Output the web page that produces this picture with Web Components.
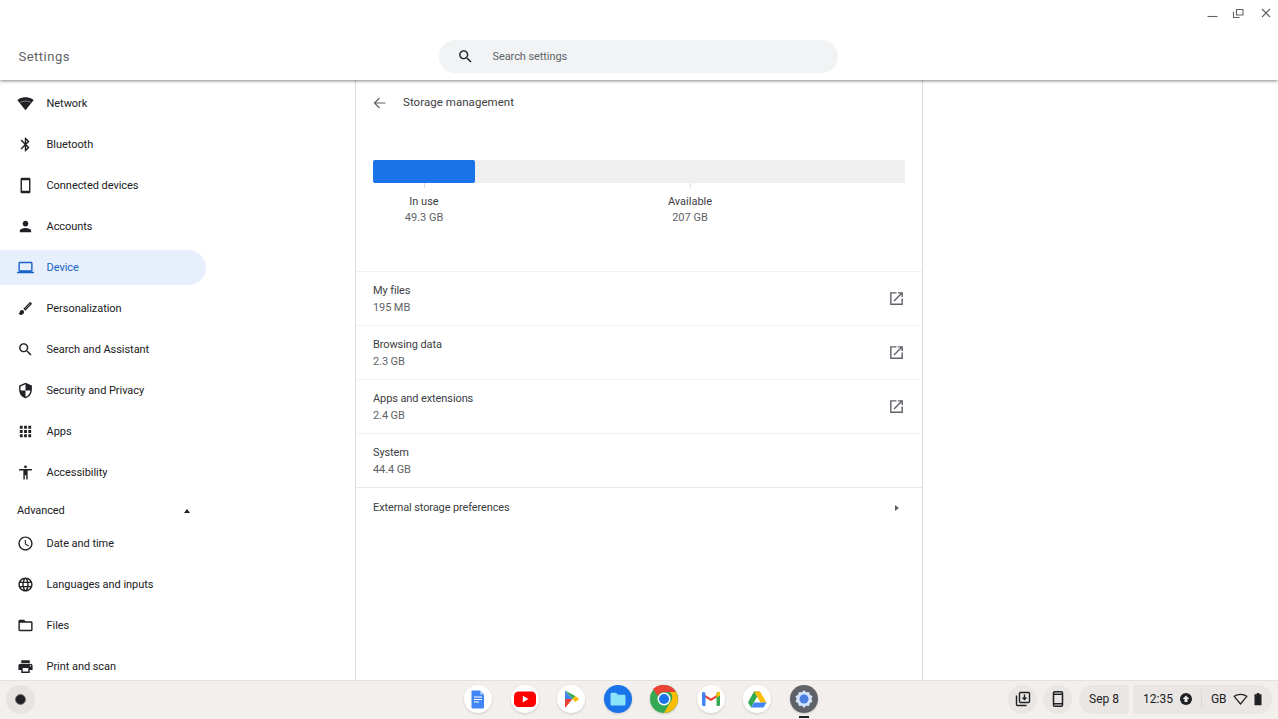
<!DOCTYPE html>
<html lang="en">
<head>
<meta charset="utf-8">
<title>Settings</title>
<style>
	html, body { margin: 0; height: 100%; overflow: hidden; background: #fff; }
	body { font-family: Roboto, "Liberation Sans", sans-serif; }
</style>
</head>
<body>
<settings-window>
	<settings-header slot="header"></settings-header>
	<settings-nav slot="nav">
		<nav-item icon="wifi">Network</nav-item>
		<nav-item icon="bluetooth">Bluetooth</nav-item>
		<nav-item icon="phone">Connected devices</nav-item>
		<nav-item icon="person">Accounts</nav-item>
		<nav-item icon="laptop" selected>Device</nav-item>
		<nav-item icon="brush">Personalization</nav-item>
		<nav-item icon="search">Search and Assistant</nav-item>
		<nav-item icon="shield">Security and Privacy</nav-item>
		<nav-item icon="apps">Apps</nav-item>
		<nav-item icon="accessibility">Accessibility</nav-item>
		<nav-section>Advanced</nav-section>
		<nav-item icon="clock">Date and time</nav-item>
		<nav-item icon="globe">Languages and inputs</nav-item>
		<nav-item icon="folder">Files</nav-item>
		<nav-item icon="print">Print and scan</nav-item>
	</settings-nav>
	<storage-page slot="main">
		<storage-row label="My files" value="195 MB" external></storage-row>
		<storage-row label="Browsing data" value="2.3 GB" external></storage-row>
		<storage-row label="Apps and extensions" value="2.4 GB" external></storage-row>
		<storage-row label="System" value="44.4 GB"></storage-row>
		<storage-link>External storage preferences</storage-link>
	</storage-page>
</settings-window>
<os-shelf></os-shelf>

<script>
const ICONS = {
	wifi: '<path d="M12 21.5 23.6 7C23.1 6.6 18.6 3 12 3 5.4 3 .9 6.6.4 7L12 21.5z"/><path d="M4.5 10.5C9 7.8 15 7.8 19.5 10.5" fill="none" stroke="#fff" stroke-opacity=".6" stroke-width="1"/>',
	bluetooth: '<path d="M17.71 7.71L12 2h-1v7.59L6.41 5 5 6.41 10.59 12 5 17.59 6.41 19 11 14.41V22h1l5.71-5.71-4.3-4.29 4.3-4.29zM13 5.83l1.88 1.88L13 9.59V5.83zm1.88 10.46L13 18.17v-3.76l1.88 1.88z"/>',
	phone: '<path d="M17 1H7c-1.1 0-2 .9-2 2v18c0 1.1.9 2 2 2h10c1.1 0 2-.9 2-2V3c0-1.1-.9-2-2-2zm0 18.5H7v-15h10v15z"/>',
	person: '<path d="M12 12c2.21 0 4-1.79 4-4s-1.79-4-4-4-4 1.79-4 4 1.79 4 4 4zm0 2c-2.67 0-8 1.34-8 4v2h16v-2c0-2.66-5.33-4-8-4z"/>',
	laptop: '<path d="M20 18c1.1 0 1.99-.9 1.99-2L22 6c0-1.1-.9-2-2-2H4c-1.1 0-2 .9-2 2v10c0 1.1.9 2 2 2H0v2h24v-2h-4zM4 6h16v10H4V6z"/>',
	brush: '<path fill-rule="evenodd" d="M7 14c-1.66 0-3 1.34-3 3 0 1.31-1.16 2-2 2 .92 1.22 2.49 2 4 2 2.21 0 4-1.79 4-4 0-1.66-1.34-3-3-3zM20.71 4.63l-1.34-1.34c-.39-.39-1.02-.39-1.41 0L9 12.25 11.75 15l8.96-8.96c.39-.39.39-1.03 0-1.41zM18.66 5 19 5.34 11.75 12.3 11.4 12z"/>',
	search: '<path d="M15.5 14h-.79l-.28-.27C15.41 12.59 16 11.11 16 9.5 16 5.91 13.09 3 9.5 3S3 5.91 3 9.5 5.91 16 9.5 16c1.61 0 3.09-.59 4.23-1.57l.27.28v.79l5 4.99L20.49 19l-4.99-5zm-6 0C7.01 14 5 11.99 5 9.5S7.01 5 9.5 5 14 7.01 14 9.5 11.99 14 9.5 14z"/>',
	shield: '<path d="M12 1L3 5v6c0 5.55 3.84 10.74 9 12 5.16-1.26 9-6.45 9-12V5l-9-4zm0 10.99h7c-.53 4.12-3.28 7.79-7 8.94V12H5V6.3l7-3.11v8.8z"/>',
	apps: '<path d="M4 8h4V4H4v4zm6 12h4v-4h-4v4zm-6 0h4v-4H4v4zm0-6h4v-4H4v4zm6 0h4v-4h-4v4zm6-10v4h4V4h-4zm-6 4h4V4h-4v4zm6 6h4v-4h-4v4zm0 6h4v-4h-4v4z"/>',
	accessibility: '<path d="M12 2c1.1 0 2 .9 2 2s-.9 2-2 2-2-.9-2-2 .9-2 2-2zm9 7h-6v13h-2v-6h-2v6H9V9H3V7h18v2z"/>',
	clock: '<path d="M11.99 2C6.47 2 2 6.48 2 12s4.47 10 9.99 10C17.52 22 22 17.52 22 12S17.52 2 11.99 2zM12 20c-4.42 0-8-3.58-8-8s3.58-8 8-8 8 3.58 8 8-3.58 8-8 8zm.5-13H11v6l5.25 3.15.75-1.23-4.5-2.67z"/>',
	globe: '<path d="M11.99 2C6.47 2 2 6.48 2 12s4.47 10 9.99 10C17.52 22 22 17.52 22 12S17.52 2 11.99 2zm6.93 6h-2.95c-.32-1.25-.78-2.45-1.38-3.56 1.84.63 3.37 1.91 4.33 3.56zM12 4.04c.83 1.2 1.48 2.53 1.91 3.96h-3.82c.43-1.43 1.08-2.76 1.91-3.96zM4.26 14C4.1 13.36 4 12.69 4 12s.1-1.36.26-2h3.38c-.08.66-.14 1.32-.14 2 0 .68.06 1.34.14 2H4.26zm.82 2h2.95c.32 1.25.78 2.45 1.38 3.56-1.84-.63-3.37-1.9-4.33-3.56zm2.95-8H5.08c.96-1.66 2.49-2.93 4.33-3.56C8.81 5.55 8.35 6.75 8.03 8zM12 19.96c-.83-1.2-1.48-2.53-1.91-3.96h3.82c-.43 1.43-1.08 2.76-1.91 3.96zM14.34 14H9.66c-.09-.66-.16-1.32-.16-2 0-.68.07-1.35.16-2h4.68c.09.65.16 1.32.16 2 0 .68-.07 1.34-.16 2zm.25 5.56c.6-1.11 1.06-2.31 1.38-3.56h2.95c-.96 1.65-2.49 2.93-4.33 3.56zM16.36 14c.08-.66.14-1.32.14-2 0-.68-.06-1.34-.14-2h3.38c.16.64.26 1.31.26 2s-.1 1.36-.26 2h-3.38z"/>',
	folder: '<path d="M20 6h-8l-2-2H4c-1.1 0-1.99.9-1.99 2L2 18c0 1.1.9 2 2 2h16c1.1 0 2-.9 2-2V8c0-1.1-.9-2-2-2zm0 12H4V8h16v10z"/>',
	print: '<path d="M19 8H5c-1.66 0-3 1.34-3 3v6h4v4h12v-4h4v-6c0-1.66-1.34-3-3-3zm-3 11H8v-5h8v5zm3-7c-.55 0-1-.45-1-1s.45-1 1-1 1 .45 1 1-.45 1-1 1zm-1-9H6v4h12V3z"/>',
	external: '<path d="M19 19H5V5h7V3H3v18h18v-9h-2v7zM14 3v2h3.59l-9.83 9.83 1.41 1.41L19 6.41V10h2V3h-7z"/>'
};

function icon(name, size) {
	return `<svg width="${size}" height="${size}" viewBox="0 0 24 24" fill="currentColor" aria-hidden="true">${ICONS[name]}</svg>`;
}

class SettingsWindow extends HTMLElement {
	constructor() {
		super();
		this.attachShadow({ mode: "open" });
		this.shadowRoot.innerHTML = `
			<style>
				:host { display: flex; flex-direction: column; height: 680px; overflow: hidden; }
				.body { flex: 1; display: flex; min-height: 0; }
				.nav { width: 355px; flex: none; overflow: hidden; }
				.main { width: 566px; flex: none; border-left: 1px solid #dadce0; border-right: 1px solid #dadce0; }
			</style>
			<slot name="header"></slot>
			<div class="body">
				<div class="nav"><slot name="nav"></slot></div>
				<div class="main"><slot name="main"></slot></div>
			</div>
		`;
	}
}

class SettingsHeader extends HTMLElement {
	constructor() {
		super();
		this.attachShadow({ mode: "open" });
		this.shadowRoot.innerHTML = `
			<style>
				:host { display: block; position: relative; z-index: 2; height: 80px; background: #fff; box-shadow: 0 1px 3px rgba(60,64,67,.65); }
				.bar { height: 80px; box-sizing: border-box; padding-top: 40px; display: grid; grid-template-columns: 439px 399px 1fr; }
				.title { font-size: 13px; letter-spacing: .5px; color: #5f6368; padding: 9px 0 0 18.5px; }
				.search { height: 33px; background: #f1f3f4; border-radius: 17px; display: flex; align-items: center; color: #202124; }
				.search svg { margin-left: 18px; }
				.search span { margin-left: 18.5px; font-size: 11px; letter-spacing: -.08px; color: #5f6368; }
				.controls { position: absolute; top: 0; right: 0; }
				.controls svg { display: block; }
			</style>
			<div class="bar">
				<div class="title">Settings</div>
				<div class="search">${icon("search", 17)}<span>Search settings</span></div>
			</div>
			<div class="controls">
				<svg width="80" height="24" viewBox="0 0 80 24" fill="none" stroke="#5f6368" stroke-width="1.1">
					<path d="M9.5 16.5h10"/>
					<path d="M35.5 12v5.5h6M38.5 9.5H45V15h-6.500z"/>
					<path d="M64 9l8 8M72 9l-8 8"/>
				</svg>
			</div>
		`;
	}
}

class SettingsNav extends HTMLElement {
	constructor() {
		super();
		this.attachShadow({ mode: "open" });
		this.shadowRoot.innerHTML = `
			<style>
				:host { display: block; padding-top: 2.6px; }
			</style>
			<slot></slot>
		`;
	}
}

class NavItem extends HTMLElement {
	constructor() {
		super();
		this.attachShadow({ mode: "open" });
		const selected = this.hasAttribute("selected");
		this.shadowRoot.innerHTML = `
			<style>
				:host { display: flex; align-items: center; height: 41px; font-size: 11px; letter-spacing: -.05px; color: ${selected ? "#1a62c9" : "#202124"}; }
				.pill { width: 206px; height: 35px; box-sizing: border-box; padding-left: 16.5px; display: flex; align-items: center; gap: 13px; border-radius: 0 18px 18px 0; background: ${selected ? "#e6effb" : "transparent"}; }
				svg { flex: none; }
			</style>
			<div class="pill">${icon(this.getAttribute("icon"), 17)}<span><slot></slot></span></div>
		`;
	}
}

class NavSection extends HTMLElement {
	constructor() {
		super();
		this.attachShadow({ mode: "open" });
		this.shadowRoot.innerHTML = `
			<style>
				:host { display: flex; align-items: center; justify-content: space-between; box-sizing: border-box; height: 24px; margin-top: 6px; width: 206px; padding: 0 16px 0 17px; font-size: 11px; letter-spacing: -.1px; color: #202124; }
				i { width: 0; height: 0; border: 3px solid transparent; border-top: 0; border-bottom: 4px solid #202124; }
			</style>
			<slot></slot><i></i>
		`;
	}
}

class StoragePage extends HTMLElement {
	constructor() {
		super();
		this.attachShadow({ mode: "open" });
		this.shadowRoot.innerHTML = `
			<style>
				:host { display: block; }
				.sub { display: flex; align-items: center; box-sizing: border-box; height: 42px; padding: 2px 0 0 17px; gap: 16px; font-size: 11.5px; letter-spacing: .05px; color: #3c4043; }
				.sub svg { flex: none; margin-top: 2px; }
				.chart { padding: 38px 17px 0; height: 111px; }
				.bar { height: 23px; background: #efefef; display: flex; }
				.bar b { width: 102px; background: #1a73e8; border-radius: 2px; }
				.labels { display: grid; grid-template-columns: 102px 1fr; font-size: 11px; text-align: center; line-height: 16px; }
				.labels i { display: block; width: 1px; height: 5px; background: #dadce0; margin: 0 auto 6px; }
				.labels p { margin: 0; color: #3c4043; }
				.labels small { display: block; font-size: 11px; color: #5f6368; }
			</style>
			<div class="sub">
				<svg width="14" height="14" viewBox="0 0 14 14" fill="none" stroke="#5f6368" stroke-width="1.2"><path d="M12.5 7H1.5M6.5 2l-5 5 5 5"/></svg>
				<span>Storage management</span>
			</div>
			<div class="chart">
				<div class="bar"><b></b></div>
				<div class="labels">
					<div><i></i><p>In use</p><small>49.3 GB</small></div>
					<div><i></i><p>Available</p><small>207 GB</small></div>
				</div>
			</div>
			<slot></slot>
		`;
	}
}

class StorageRow extends HTMLElement {
	constructor() {
		super();
		this.attachShadow({ mode: "open" });
		this.shadowRoot.innerHTML = `
			<style>
				:host { display: flex; align-items: center; justify-content: space-between; box-sizing: border-box; height: 54px; padding: 0 17px; border-top: 1px solid #f1f1f1; font-size: 11px; letter-spacing: -.1px; line-height: 17px; color: #3c4043; }
				small { display: block; font-size: 11px; color: #5f6368; }
				svg { color: #5f6368; }
			</style>
			<div>${this.getAttribute("label")}<small>${this.getAttribute("value")}</small></div>
			${this.hasAttribute("external") ? icon("external", 17) : ""}
		`;
	}
}

class StorageLink extends HTMLElement {
	constructor() {
		super();
		this.attachShadow({ mode: "open" });
		this.shadowRoot.innerHTML = `
			<style>
				:host { display: flex; align-items: center; justify-content: space-between; box-sizing: border-box; height: 40px; padding: 0 23px 0 17px; border-top: 1px solid #e8e8e8; font-size: 11px; letter-spacing: -.12px; color: #3c4043; }
				i { width: 0; height: 0; border: 3px solid transparent; border-right: 0; border-left: 4px solid #5f6368; }
			</style>
			<slot></slot><i></i>
		`;
	}
}

const APP_LOGOS = {
	docs: `<circle cx="14" cy="14" r="14" fill="#fff"/><path d="M8.5 5.5H16l4 4v13q0 1-1 1H8.500q-1 0-1-1v-16q0-1 1-1z" fill="#4285f4"/><path d="M16 5.500v4h4z" fill="#a1c2fa"/><path d="M10 12h8M10 14.500h8M10 17h5" stroke="#fff" stroke-width="1.2"/>`,
	youtube: `<circle cx="14" cy="14" r="14" fill="#fff"/><rect x="3" y="6.5" width="22" height="15.5" rx="4.5" fill="#f00"/><path d="M11.8 10.800v6.600l5.500-3.300z" fill="#fff"/>`,
	play: `<circle cx="14" cy="14" r="14" fill="#fff"/><path d="M8 5.500V14h7.500z" fill="#4285f4"/><path d="M8 5.500 15.500 14l2.800-3z" fill="#34a853"/><path d="M8 23v-9h7.500z" fill="#ea4335"/><path d="M18.300 11l4 3-4 3-2.800-3z" fill="#fbbc04"/>`,
	files: `<circle cx="14" cy="14" r="14" fill="#1a73e8"/><path d="M6.5 9q0-1.200 1.200-1.200H12l2 2h6.300q1.200 0 1.200 1.200v8.200q0 1.200-1.200 1.200H7.700q-1.200 0-1.200-1.200z" fill="#8ae2fb"/>`,
	chrome: `<circle cx="14" cy="14" r="14" fill="#34a853"/><path d="M14 0a14 14 0 0 1 12.100 7H14a7 7 0 0 0-6.300 4L3 3.900A14 14 0 0 1 14 0z" fill="#ea4335"/><path d="M26.100 7A14 14 0 0 1 14 28l6-10.500a7 7 0 0 0 0-10.500z" fill="#fbbc04"/><circle cx="14" cy="14" r="6.500" fill="#fff"/><circle cx="14" cy="14" r="5" fill="#1a73e8"/>`,
	gmail: `<circle cx="14" cy="14" r="14" fill="#fff"/><path d="M5 10.500 14 16l9-5.500V8l-9 5.500L5 8z" fill="#ea4335"/><path d="M5 8.500q0-2 2-1.500l1.500 1v13h-2Q5 21 5 19.500z" fill="#4285f4"/><path d="M23 8.500q0-2-2-1.500l-1.500 1v13h2q1.500 0 1.500-1.500z" fill="#34a853"/><path d="M19.500 8 23 6.500v4l-3.500 2.200z" fill="#fbbc04"/>`,
	drive: `<circle cx="14" cy="14" r="14" fill="#fff"/><path d="M11 6.500h6l-9 16-3-5z" fill="#34a853"/><path d="M11 6.500h6l6.500 11h-6z" fill="#fbbc04"/><path d="M11 17.500h12.500l-3 5H8z" fill="#4285f4"/>`,
	settings: `<circle cx="14" cy="14" r="14" fill="#5f6368"/><path d="M14 5.500l2 2.300 3-.4.8 2.900 2.700 1.400-1.100 2.800 1.100 2.800-2.700 1.400-.8 2.900-3-.4-2 2.300-2-2.300-3 .4-.8-2.900-2.700-1.400 1.100-2.800-1.100-2.800 2.700-1.400.8-2.900 3 .4z" fill="#d2e3fc" transform="translate(0 -.5)"/><circle cx="14" cy="14" r="4.500" fill="#4c7fe0"/>`
};

class ShelfApp extends HTMLElement {
	constructor() {
		super();
		this.attachShadow({ mode: "open" });
		this.shadowRoot.innerHTML = `
			<style>
				:host { display: block; width: 28px; height: 28px; position: relative; }
				svg { display: block; filter: drop-shadow(0 1px 1px rgba(0,0,0,.15)); }
				:host([active])::after { content: ""; position: absolute; left: 9px; top: 31px; width: 10px; height: 2px; background: #202124; }
			</style>
			<svg width="28" height="28" viewBox="0 0 28 28">${APP_LOGOS[this.getAttribute("name")]}</svg>
		`;
	}
}

class OsShelf extends HTMLElement {
	constructor() {
		super();
		this.attachShadow({ mode: "open" });
		this.shadowRoot.innerHTML = `
			<style>
				:host { display: grid; grid-template-columns: 464px auto 1fr; align-items: center; height: 39px; padding-bottom: 2px; background: #f3efec; border-top: 1px solid #e4e1de; box-sizing: border-box; font-size: 12px; color: #202124; position: relative; }
				.launcher { width: 29px; height: 29px; margin-left: 6px; border-radius: 50%; background: #e6e3e0; display: flex; align-items: center; justify-content: center; }
				.launcher i { width: 9px; height: 9px; border-radius: 50%; background: #202124; border: 1.5px solid #777; }
				.apps { display: flex; gap: 18.55px; }
				.tray { display: flex; justify-content: flex-end; align-items: center; padding-right: 6px; }
				.round { width: 29px; height: 29px; border-radius: 50%; background: #e9e6e3; display: flex; align-items: center; justify-content: center; margin-right: 6px; }
				.date { height: 29px; width: 50px; background: #e9e6e3; border-radius: 15px 4px 4px 15px; display: flex; align-items: center; justify-content: center; margin-right: 4px; }
				.status { height: 29px; width: 139px; box-sizing: border-box; background: #e9e6e3; border-radius: 4px 15px 15px 4px; display: flex; align-items: center; padding-left: 10px; }
				.status .sep { width: 1px; height: 19px; background: #dcd9d6; margin: 0 9px 0 8px; }
				.status svg { flex: none; }
				.gb { margin-right: 6px; }
			</style>
			<div class="launcher"><i></i></div>
			<div class="apps">
				<shelf-app name="docs"></shelf-app>
				<shelf-app name="youtube"></shelf-app>
				<shelf-app name="play"></shelf-app>
				<shelf-app name="files"></shelf-app>
				<shelf-app name="chrome"></shelf-app>
				<shelf-app name="gmail"></shelf-app>
				<shelf-app name="drive"></shelf-app>
				<shelf-app name="settings" active></shelf-app>
			</div>
			<div class="tray">
				<div class="round">
					<svg width="18" height="18" viewBox="0 0 18 18" fill="none" stroke="#202124" stroke-width="1.4"><rect x="5.5" y="2.5" width="10" height="10" rx="1"/><path d="M2.5 5.500v9a1 1 0 0 0 1 1h9M10.500 4.500v5M8.500 7.500l2 2 2-2"/></svg>
				</div>
				<div class="round" style="margin-right:7px">
					<svg width="16" height="18" viewBox="0 0 16 18" fill="none" stroke="#202124" stroke-width="1.5"><rect x="3.5" y="1.8" width="9" height="14.4" rx="1.3"/><path d="M3.5 4.300h9M3.500 13.700h9"/></svg>
				</div>
				<div class="date">Sep 8</div>
				<div class="status">
					<span>12:35</span>
					<svg style="margin-left:6px" width="14" height="14" viewBox="0 0 14 14"><circle cx="7" cy="7" r="6" fill="#202124"/><path d="M7 3.500 3.500 7h2v3h3V7h2z" fill="#e9e6e3"/></svg>
					<span class="sep"></span>
					<span class="gb">GB</span>
					<svg width="15" height="14" viewBox="0 0 15 14" fill="none" stroke="#202124" stroke-width="1.2"><path d="M7.500 12 1.200 4.300C3 3 5 2.300 7.500 2.300s4.500.7 6.300 2z"/></svg>
					<svg style="margin-left:5px" width="10" height="14" viewBox="0 0 10 14"><path d="M3.800 1h2.400v1.200h2.300v11h-7v-11h2.300z" fill="#202124"/></svg>
				</div>
			</div>
		`;
	}
}

customElements.define("settings-window", SettingsWindow);
customElements.define("settings-header", SettingsHeader);
customElements.define("settings-nav", SettingsNav);
customElements.define("nav-item", NavItem);
customElements.define("nav-section", NavSection);
customElements.define("storage-page", StoragePage);
customElements.define("storage-row", StorageRow);
customElements.define("storage-link", StorageLink);
customElements.define("shelf-app", ShelfApp);
customElements.define("os-shelf", OsShelf);
</script>
</body>
</html>
